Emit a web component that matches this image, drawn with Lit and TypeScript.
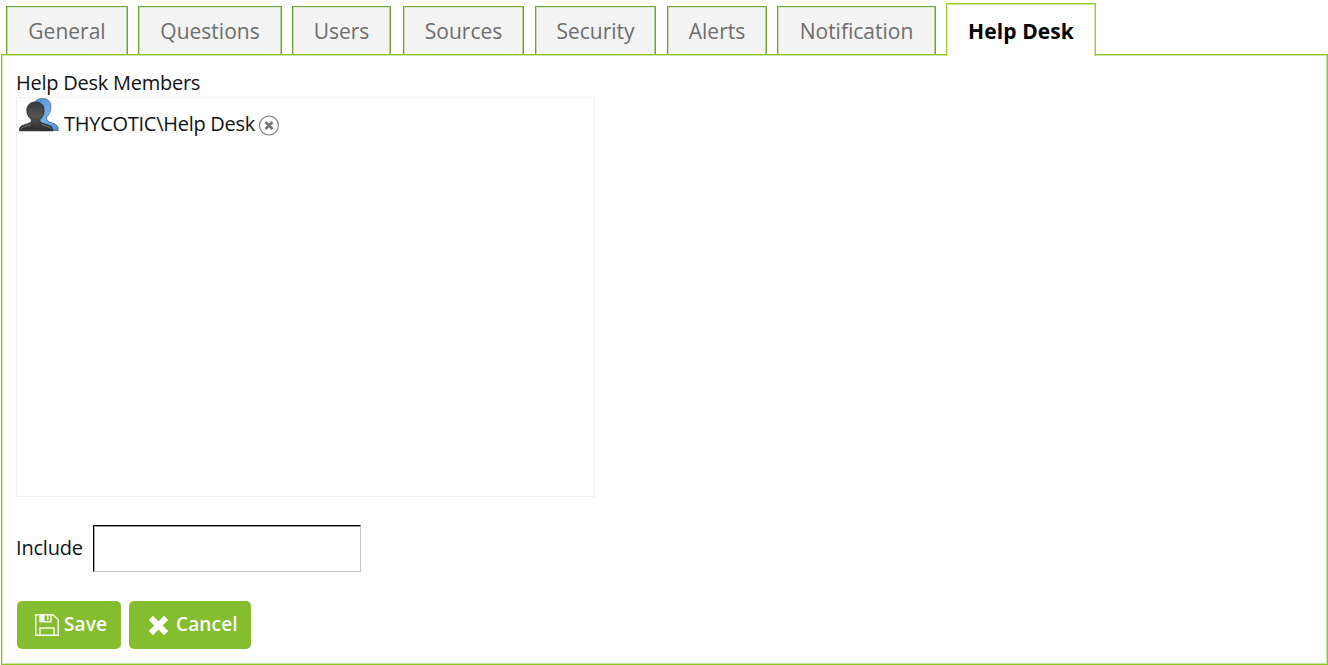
import { LitElement, html, css } from "lit";
import { customElement, state } from "lit/decorators.js";
import { classMap } from "lit/directives/class-map.js";

const TABS = [
  { label: "General", width: 122, gap: 10 },
  { label: "Questions", width: 144, gap: 10 },
  { label: "Users", width: 99, gap: 12 },
  { label: "Sources", width: 121, gap: 11 },
  { label: "Security", width: 121, gap: 11 },
  { label: "Alerts", width: 100, gap: 10 },
  { label: "Notification", width: 159, gap: 10 },
  { label: "Help Desk", width: 150, gap: 0 },
];

@customElement("app-root")
export class AppRoot extends LitElement {
  static styles = css`
    :host {
      display: flex;
      flex-direction: column;
      box-sizing: border-box;
      width: 1328px;
      height: 665px;
      overflow: hidden;
      background: #fff;
      color: #111;
      font: 20px/28px "Open Sans", sans-serif;
    }
    * { box-sizing: border-box; }
    .tabs {
      display: flex;
      align-items: flex-end;
      height: 54px;
      padding-left: 6px;
      flex: none;
      z-index: 1;
    }
    .tab {
      height: 48px;
      padding: 10px 0 0;
      border: 1px solid #72a336;
      border-bottom: 0;
      box-shadow: inset 1px 0 #c5d9ac, inset -1px 0 #b5d092, inset 0 1px #dce7cf;
      background: #f4f4f4;
      color: #6d6d6d;
      font-size: 21px;
      text-align: center;
      white-space: nowrap;
      cursor: pointer;
    }
    .tab.active {
      height: 53px;
      margin-bottom: -2px;
      padding-top: 13px;
      background: #fff;
      color: #000;
      font-weight: 700;
      letter-spacing: 0.1px;
      border-color: #97ca32;
      box-shadow: inset 1px 0 #e3f1c8, inset -1px 0 #d0e8a4, inset 0 1px #cfe6a2;
    }
    .panel {
      display: flex;
      flex-direction: column;
      align-items: flex-start;
      width: 1327px;
      height: 611px;
      margin-left: 1px;
      padding: 14px 14px 0;
      border: 1px solid #8dc51f;
      box-shadow: inset 1px 1px #cbe59c, inset -1px -1px #cbe59c;
    }
    .heading { height: 28px; letter-spacing: -0.25px; }
    .members {
      width: 579px;
      height: 400px;
      border: 1px solid #f2f2f2;
      padding: 0 2px;
    }
    .member { display: flex; align-items: flex-start; }
    .people { width: 40px; height: 35px; flex: none; }
    .name { margin: 12px 0 0 5px; letter-spacing: -0.27px; }
    .remove { width: 22px; height: 22px; margin: 16px 0 0 3px; }
    .include { display: flex; align-items: center; margin-top: 28px; height: 47px; letter-spacing: -0.2px; }
    .caption { margin-top: -1px; }
    .field {
      width: 268px;
      height: 47px;
      margin-left: 10px;
      padding: 0 8px;
      border: 1px solid #c3c3c3;
      border-top-color: #000;
      border-left-color: #000;
      box-shadow: inset 0 1px #999, inset 1px 0 #aaa;
      border-radius: 0;
      outline: 0;
      font: inherit;
      background: #fff;
    }
    .actions { display: flex; gap: 8px; margin: 29px 0 0 1px; }
    .button {
      display: flex;
      align-items: center;
      height: 48px;
      padding: 0 0 2px;
      border: 0;
      border-radius: 5px;
      background: #84bd2e;
      color: #fff;
      font: 600 19px/28px "Open Sans", sans-serif;
      letter-spacing: 0.15px;
      cursor: pointer;
    }
    .save { width: 104px; padding-left: 18px; }
    .cancel { width: 122px; padding-left: 20px; }
    .disk { width: 24px; height: 22px; margin: 2px 5px 0 0; }
    .cross { width: 19px; height: 19px; margin: 3px 8px 0 0; }
  `;

  @state() private selected = "Help Desk";

  render() {
    return html`
      <div class="tabs">
        ${TABS.map(
          (t) => html`<div
            class=${classMap({ tab: true, active: t.label === this.selected })}
            style="width:${t.width}px;margin-right:${t.gap}px"
            @click=${() => (this.selected = t.label)}
          >${t.label}</div>`
        )}
      </div>
      <div class="panel">
        <div class="heading">Help Desk Members</div>
        <div class="members">
          <div class="member">
            <svg class="people" viewBox="0 0 40 35">
              <defs>
                <linearGradient id="dark" x2="0" y2="1"><stop stop-color="#3a3a3a" /><stop offset=".5" stop-color="#545454" /><stop offset="1" stop-color="#2b2b2b" /></linearGradient>
                <linearGradient id="blue" x2="1" y2="1"><stop stop-color="#4f8fd0" /><stop offset=".55" stop-color="#74b2ea" /><stop offset="1" stop-color="#4d8cd2" /></linearGradient>
              </defs>
              <path fill="url(#blue)" stroke="#4a6f98" stroke-width=".9" d="M15 5C17 1.800 20 .5 23.500.6c6 .2 8.800 4 8.300 8.500 0 4-1.300 7-3.800 9.500-1 3-.2 4.300 2.500 5.400l5 2c2.500 1 3.700 2.500 3.700 6.500H22L15 19z" />
              <path fill="url(#dark)" stroke="#1e1e1e" stroke-width=".8" d="M7.800 12.300c0-5 3.600-8.300 8.700-8.300s8.700 3.200 8.500 8.500c0 3.500-1.600 6.800-4 9-.5 1.800.2 2.800 2.500 3.700l6 2c3 1 4.200 2.200 4.300 5.600H.5c0-3.400 1-4.700 4-5.600l5.500-2c2.300-.9 2.700-2 2.200-3.700C9.500 19.300 7.800 16 7.800 12.300z" />
              <path fill="none" stroke="#999" stroke-width=".9" opacity=".7" d="M2 31.500c.3-1.700 2-2.300 4-3l5.500-2M23 26.500l5.500 1.900c2 .7 3.300 1.400 3.700 3.100" />
            </svg>
            <span class="name">THYCOTIC\\Help Desk</span>
            <svg class="remove" viewBox="0 0 22 22">
              <circle cx="11" cy="11.500" r="9.500" fill="#fff" stroke="#777" stroke-width="1.100" />
              <path d="M7.500 8l7 7M14.500 8l-7 7" stroke="#757575" stroke-width="2.600" />
            </svg>
          </div>
        </div>
        <label class="include"><span class="caption">Include</span><input class="field" type="text" /></label>
        <div class="actions">
          <button class="button save">
            <svg class="disk" viewBox="0 0 24 22" fill="none" stroke="#f4faec" stroke-width="1.500">
              <path d="M.8.8H18l5.200 5v15.400H.8zM5 .8v7h11v-7M5 21v-7h14v7" />
              <path d="M5 1h4.500v6H5z" fill="#f4faec" stroke="none" />
              <path d="M12.800 1v5" />
            </svg>Save
          </button>
          <button class="button cancel">
            <svg class="cross" viewBox="0 0 19 19"><path d="M4 4l11 11M15 4L4 15" stroke="#fff" stroke-width="6" stroke-linecap="square" /></svg>Cancel
          </button>
        </div>
      </div>
    `;
  }
}
